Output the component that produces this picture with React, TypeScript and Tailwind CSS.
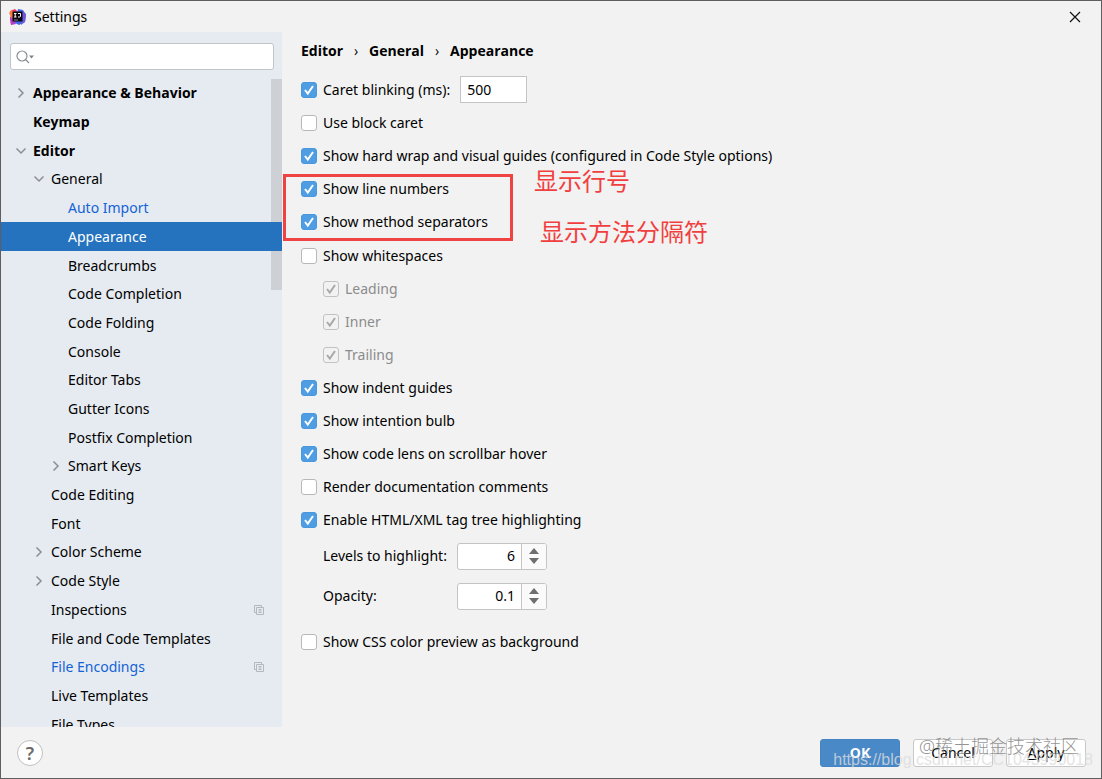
import { useState } from 'react';
import type { ReactNode } from 'react';

interface TreeItem {
  name: string;
  level: number;
  state?: 'open' | 'closed';
  modified?: boolean;
  projectLevel?: boolean;
}

const items: TreeItem[] = [
  { name: 'Appearance & Behavior', level: 0, state: 'closed' },
  { name: 'Keymap', level: 0 },
  { name: 'Editor', level: 0, state: 'open' },
  { name: 'General', level: 1, state: 'open' },
  { name: 'Auto Import', level: 2, modified: true },
  { name: 'Appearance', level: 2 },
  { name: 'Breadcrumbs', level: 2 },
  { name: 'Code Completion', level: 2 },
  { name: 'Code Folding', level: 2 },
  { name: 'Console', level: 2 },
  { name: 'Editor Tabs', level: 2 },
  { name: 'Gutter Icons', level: 2 },
  { name: 'Postfix Completion', level: 2 },
  { name: 'Smart Keys', level: 2, state: 'closed' },
  { name: 'Code Editing', level: 1 },
  { name: 'Font', level: 1 },
  { name: 'Color Scheme', level: 1, state: 'closed' },
  { name: 'Code Style', level: 1, state: 'closed' },
  { name: 'Inspections', level: 1, projectLevel: true },
  { name: 'File and Code Templates', level: 1 },
  { name: 'File Encodings', level: 1, modified: true, projectLevel: true },
  { name: 'Live Templates', level: 1 },
  { name: 'File Types', level: 1 },
];

const indents = ['pl-3', 'pl-[30px]', 'pl-[47px]'];

function Logo() {
  return (
    <svg viewBox="0 0 18 18" className="h-[18px] w-[18px]" aria-hidden="true">
      <path d="M1 3 6 1l4 4-3 9-5 3-1-6 1-4z" fill="#f0325c" />
      <path d="m1 9 3-1 3 8-5 1z" fill="#b43ccf" />
      <path d="m0 5 3-3 3 4-3 5z" fill="#fb7a3a" />
      <path d="m9 1 5 1 3 5-1 7-6 3-4-2z" fill="#3f68e8" />
      <path d="m13 2 4 4-1 8-4 3z" fill="#6f5ade" />
      <path d="M3.500 3.500h10v10h-10z" fill="#0b0610" />
      <path d="M5 5.500h2.500M6.200 5.500v3.500M5 9h2.500M9 5.500h2.500v2.500q0 1-1 1H9" fill="none" stroke="#fff" strokeWidth="1" />
      <path d="M5 12h4" fill="none" stroke="#a9a6ab" strokeWidth=".8" />
    </svg>
  );
}

function Chevron({ open }: { open: boolean }) {
  return (
    <svg viewBox="0 0 16 16" className="h-4 w-4" fill="none" stroke="#8b8f94" strokeWidth="1.500" aria-hidden="true">
      <path d={open ? 'M3.500 5.500 8 10 12.500 5.500' : 'M5.500 3.500 10 8 5.500 12.500'} />
    </svg>
  );
}

function ProjectIcon() {
  return (
    <svg viewBox="0 0 10 10" className="ml-auto mr-[18px] h-[10px] w-[10px]" fill="none" stroke="#b3b8be" aria-hidden="true">
      <path d="M2 7.500H.5v-7h7V2" />
      <path d="M2.500 2.500h7v7h-7zM4.500 4.500h3M4.500 6h3M4.500 7.500h3" />
    </svg>
  );
}

interface TreeRowProps {
  item: TreeItem;
  selected: boolean;
  onSelect: (name: string) => void;
}

function TreeRow({ item, selected, onSelect }: TreeRowProps) {
  const color = selected ? 'relative z-10 bg-[#2573be] text-white' : item.modified ? 'text-[#1463d6]' : 'text-black';
  const font = item.level === 0 ? "font-['Open_Sans',sans-serif] font-bold" : '';
  return (
    <li className="flex">
      <button
        type="button"
        className={`flex w-full items-center text-left ${indents[item.level]} ${color} ${font}`}
        onClick={() => onSelect(item.name)}
      >
        <span className="mr-1 h-4 w-4 shrink-0">{item.state && <Chevron open={item.state === 'open'} />}</span>
        <span className="whitespace-nowrap">{item.name}</span>
        {item.projectLevel && <ProjectIcon />}
      </button>
    </li>
  );
}

interface CheckProps {
  label: string;
  checked?: boolean;
  disabled?: boolean;
  children?: ReactNode;
}

function Check({ label, checked = false, disabled = false, children }: CheckProps) {
  return (
    <div className="flex h-[33px] items-center">
      <label className={`flex items-center gap-[6px] whitespace-nowrap ${disabled ? 'text-[#8c8c8c]' : ''}`}>
        <span className="grid h-4 w-4">
          <input
            type="checkbox"
            defaultChecked={checked}
            disabled={disabled}
            className="peer col-start-1 row-start-1 h-4 w-4 appearance-none rounded-[3px] border border-[#b8b8b8] bg-white checked:border-[#4b97dc] checked:bg-[#4f9ee3] disabled:border-[#c2c2c2] disabled:bg-[#f2f2f2]"
          />
          <svg
            viewBox="0 0 16 16"
            className="pointer-events-none col-start-1 row-start-1 hidden h-4 w-4 stroke-white peer-checked:block peer-disabled:stroke-[#a8a8a8]"
            fill="none"
            strokeWidth="2"
            aria-hidden="true"
          >
            <path d="m4 8 2.800 3.500L12 4" />
          </svg>
        </span>
        {label}
      </label>
      {children}
    </div>
  );
}

function Spinner({ id, label, initial, step }: { id: string; label: string; initial: string; step: number }) {
  const [value, setValue] = useState(initial);
  const change = (delta: number) => setValue(String(Math.round((Number(value) + delta) * 10) / 10));

  return (
    <div className="flex h-10 items-center pl-[22px]">
      <label htmlFor={id} className="w-[134px] whitespace-nowrap">
        {label}
      </label>
      <div className="flex h-[27px] w-[90px] overflow-hidden rounded-[3px] border border-[#c4c4c4] bg-white">
        <input
          id={id}
          className="w-16 border-r border-[#c4c4c4] pr-[6px] text-right outline-none"
          value={value}
          onChange={(e) => setValue(e.target.value)}
        />
        <div className="flex flex-1 flex-col bg-[#fafafa]">
          <button type="button" aria-label="Increase" className="flex flex-1 items-end justify-center pb-[2px]" onClick={() => change(step)}>
            <svg viewBox="0 0 10 6" className="h-[6px] w-[10px]">
              <path d="M0 6 5 0l5 6z" fill="#6e6e6e" />
            </svg>
          </button>
          <button type="button" aria-label="Decrease" className="flex flex-1 items-start justify-center pt-[2px]" onClick={() => change(-step)}>
            <svg viewBox="0 0 10 6" className="h-[6px] w-[10px]">
              <path d="m0 0 5 6 5-6z" fill="#6e6e6e" />
            </svg>
          </button>
        </div>
      </div>
    </div>
  );
}

export default function App() {
  const [selected, setSelected] = useState('Appearance');

  return (
    <div className="relative flex h-screen flex-col overflow-hidden border border-[#5f5d60] bg-[#f2f2f2] font-['Noto_Sans','Noto_Sans_CJK_SC',sans-serif] text-sm text-black">
      <header className="flex h-[31px] shrink-0 items-center pl-2">
        <Logo />
        <h1 className="ml-[7px]">Settings</h1>
        <button type="button" aria-label="Close" className="ml-auto mr-[18px] flex h-4 w-4 items-center justify-center">
          <svg viewBox="0 0 12 12" className="h-3 w-3" fill="none" stroke="#111" strokeWidth="1.200">
            <path d="m1 1 10 10M11 1 1 11" />
          </svg>
        </button>
      </header>

      <div className="flex min-h-0 flex-1">
        <aside className="flex w-[281px] shrink-0 flex-col bg-[#e6ebf1]">
          <div className="ml-[9px] mr-2 mt-[11px] flex h-[27px] shrink-0 items-center rounded-[3px] border border-[#c0c6c8] bg-white pl-[5px]">
            <svg viewBox="0 0 18 14" className="h-[14px] w-[18px]" fill="none" stroke="#8b8f94" strokeWidth="1.200" aria-hidden="true">
              <circle cx="6" cy="6" r="5" />
              <path d="m9.500 9.500 3.500 3.500" />
              <path d="M13 5.500h5L15.500 8.500z" fill="#7f8387" stroke="none" />
            </svg>
            <input type="search" aria-label="Search settings" className="min-w-0 flex-1 px-1 outline-none" />
          </div>
          <nav className="relative mt-[9px] min-h-0 flex-1 overflow-hidden" aria-label="Settings tree">
            <div className="absolute right-0 top-0 h-[211px] w-[11px] bg-[#cdd1d5]" />
            <ul className="grid h-[660px] auto-rows-fr">
              {items.map((item) => (
                <TreeRow key={item.name} item={item} selected={item.name === selected} onSelect={setSelected} />
              ))}
            </ul>
          </nav>
        </aside>

        <main className="min-w-0 flex-1 pl-[19px] pt-2">
          <div className="flex h-[22px] items-center font-['Open_Sans',sans-serif] font-bold">
            <span>Editor</span>
            <span className="w-[26px] text-center font-normal">›</span>
            <span>General</span>
            <span className="w-[26px] text-center font-normal">›</span>
            <span>Appearance</span>
          </div>

          <div className="mt-[11px]">
            <Check label="Caret blinking (ms):" checked>
              <input
                aria-label="Caret blinking period"
                defaultValue="500"
                className="ml-[10px] h-[27px] w-[67px] border border-[#c4c4c4] bg-white px-[6px] outline-none"
              />
            </Check>
            <Check label="Use block caret" />
            <Check label="Show hard wrap and visual guides (configured in Code Style options)" checked />
            <div className="relative">
              <Check label="Show line numbers" checked />
              <Check label="Show method separators" checked />
              <div className="pointer-events-none absolute -left-[18px] top-[2px] h-[67px] w-[230px] border-[3px] border-[#ef4343]" />
              <p className="absolute -top-[7px] left-[233px] text-2xl text-[#f13f3f]">显示行号</p>
              <p className="absolute left-[239px] top-11 text-2xl text-[#f13f3f]">显示方法分隔符</p>
            </div>
            <div className="pt-px">
              <Check label="Show whitespaces" />
              <div className="pl-[22px]">
                <Check label="Leading" checked disabled />
                <Check label="Inner" checked disabled />
                <Check label="Trailing" checked disabled />
              </div>
            </div>
            <Check label="Show indent guides" checked />
            <Check label="Show intention bulb" checked />
            <Check label="Show code lens on scrollbar hover" checked />
            <Check label="Render documentation comments" />
            <Check label="Enable HTML/XML tag tree highlighting" checked />
            <Spinner id="levels" label="Levels to highlight:" initial="6" step={1} />
            <Spinner id="opacity" label="Opacity:" initial="0.1" step={0.1} />
            <div className="mt-[9px]">
              <Check label="Show CSS color preview as background" />
            </div>
          </div>
        </main>
      </div>

      <footer className="flex h-[51px] shrink-0 items-center gap-[13px] pl-4 pr-[15px]">
        <button
          type="button"
          aria-label="Help"
          className="mr-auto flex h-[26px] w-[26px] items-center justify-center rounded-full border border-[#c0c0c0] bg-white text-lg font-semibold text-[#6a6a6a]"
        >
          ?
        </button>
        <button type="button" className="h-7 w-20 rounded-[3px] border border-[#4583c2] bg-[#4a89c8] font-bold text-white">
          OK
        </button>
        <button type="button" className="h-7 w-20 rounded-[3px] border border-[#c8c8c8] bg-white">
          Cancel
        </button>
        <button type="button" className="h-7 w-20 rounded-[3px] border border-[#c8c8c8] bg-white">
          <span className="underline">A</span>pply
        </button>
      </footer>

      <p className="pointer-events-none absolute bottom-[6px] right-2 whitespace-nowrap font-['Liberation_Sans',sans-serif] text-base text-[#dcdcdc]/80">
        https://blog.csdn.net/CC1043990018
      </p>
      <p className="pointer-events-none absolute bottom-[18px] right-[22px] whitespace-nowrap text-lg font-light text-[#777]/80">@稀土掘金技术社区</p>
    </div>
  );
}
